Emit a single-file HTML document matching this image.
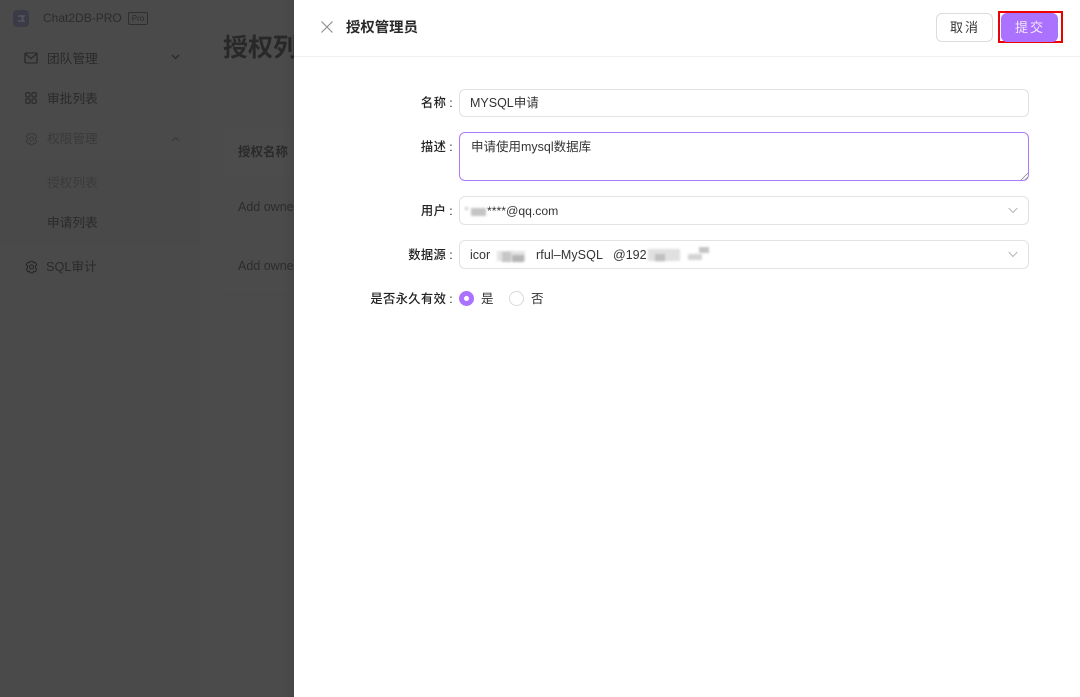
<!DOCTYPE html>
<html><head><meta charset="utf-8">
<style>
html,body{margin:0;padding:0;width:1080px;height:697px;overflow:hidden;background:#fff;font-family:"Liberation Sans","Noto Sans CJK SC",sans-serif}
.a{position:absolute;white-space:nowrap}
#left{position:absolute;left:0;top:0;width:294px;height:697px;background:#4b4b4b;overflow:hidden}
#side{position:absolute;left:0;top:0;width:200px;height:697px;background:#4a4a4a}
.m{font-size:12.7px;line-height:18px;color:#2a2a2a}
.f{position:absolute;left:459px;width:568px;border:1px solid #e2e2e2;border-radius:6px;background:#fff;box-sizing:content-box}
.l{position:absolute;font-size:12.3px;line-height:18px;color:#222;font-weight:500;text-align:right;right:627px;white-space:nowrap;letter-spacing:.35px}
.l i{font-style:normal;margin-left:3px}
.t{position:absolute;font-size:12.5px;line-height:18px;color:#333;white-space:nowrap}
.b{position:absolute;background:#cfcfcf;filter:blur(1px)}
</style></head>
<body>
<div id="left">
 <div id="side"></div>
 <div class="a" style="left:0;top:36px;width:200px;height:1px;background:#484848"></div>
 <div class="a" style="left:0;top:160px;width:200px;height:85px;background:#494949"></div>
 <svg class="a" style="left:12px;top:9px" width="18" height="19" viewBox="0 0 18 19"><rect x="1" y="1" width="16" height="17" rx="4" fill="#3b3b47"/><path d="M6 7h6l-2 2 2 3H6" fill="none" stroke="#55555f" stroke-width="1.5"/></svg>
 <div class="a" style="left:43px;top:9px;font-size:12px;line-height:18px;color:#2c2c2c">Chat2DB-PRO</div>
 <div class="a" style="left:128px;top:12px;width:18px;height:11px;border:1px solid #2f2f2f;border-radius:2px;font-size:8px;line-height:11px;text-align:center;color:#2c2c2c">Pro</div>
 <svg class="a" style="left:24px;top:52px" width="14" height="12" viewBox="0 0 14 12" fill="none" stroke="#252525" stroke-width="1.1"><rect x="1" y="1" width="12" height="10" rx="1"/><path d="M1.5 2 7 6.5 12.5 2"/></svg>
 <div class="a m" style="left:47px;top:50px">团队管理</div>
 <svg class="a" style="left:171px;top:54px" width="9" height="6" viewBox="0 0 9 6" fill="none" stroke="#252525" stroke-width="1.2"><path d="M1 1 4.5 4.5 8 1"/></svg>
 <svg class="a" style="left:25px;top:92px" width="12" height="12" viewBox="0 0 12 12" fill="none" stroke="#252525" stroke-width="1"><rect x=".8" y=".8" width="4.2" height="4.2" rx=".7"/><rect x="7" y=".8" width="4.2" height="4.2" rx=".7"/><rect x=".8" y="7" width="4.2" height="4.2" rx=".7"/><rect x="7" y="7" width="4.2" height="4.2" rx=".7"/></svg>
 <div class="a m" style="left:47px;top:90px">审批列表</div>
 <svg class="a" style="left:25px;top:132px" width="13" height="14" viewBox="0 0 13 14" fill="none" stroke="#3a3a3a" stroke-width="1" stroke-linejoin="round"><path d="M5 1.2H8L8.5 2.8 10.2 2.2 11.8 4.8 10.5 6 10.5 8 11.8 9.2 10.2 11.8 8.5 11.2 8 12.8H5L4.5 11.2 2.8 11.8 1.2 9.2 2.5 8V6L1.2 4.8 2.8 2.2 4.5 2.8Z"/><circle cx="6.5" cy="7" r="2"/></svg>
 <div class="a m" style="left:47px;top:130px;color:#3a3a3a">权限管理</div>
 <svg class="a" style="left:171px;top:136px" width="9" height="6" viewBox="0 0 9 6" fill="none" stroke="#3a3a3a" stroke-width="1.2"><path d="M1 5 4.5 1.5 8 5"/></svg>
 <div class="a m" style="left:47px;top:174px;color:#3b3b3b">授权列表</div>
 <div class="a m" style="left:47px;top:214px">申请列表</div>
 <svg class="a" style="left:25px;top:260px" width="13" height="14" viewBox="0 0 13 14" fill="none" stroke="#252525" stroke-width="1" stroke-linejoin="round"><path d="M5 1.2H8L8.5 2.8 10.2 2.2 11.8 4.8 10.5 6 10.5 8 11.8 9.2 10.2 11.8 8.5 11.2 8 12.8H5L4.5 11.2 2.8 11.8 1.2 9.2 2.5 8V6L1.2 4.8 2.8 2.2 4.5 2.8Z"/><circle cx="6.5" cy="7" r="2"/></svg>
 <div class="a m" style="left:46px;top:258px">SQL审计</div>
 <div class="a" style="left:223px;top:31px;font-size:25px;line-height:34px;font-weight:700;color:#282828">授权列表</div>
 <div class="a" style="left:223px;top:127px;width:71px;height:50px;background:#4c4c4c"></div>
 <div class="a" style="left:238px;top:143px;font-size:12.5px;line-height:18px;font-weight:700;color:#2a2a2a">授权名称</div>
 <div class="a" style="left:238px;top:198px;font-size:12.5px;line-height:18px;color:#2c2c2c">Add owner</div>
 <div class="a" style="left:238px;top:257px;font-size:12.5px;line-height:18px;color:#2c2c2c">Add owner</div>
 <div class="a" style="left:223px;top:236px;width:71px;height:1px;background:#494949"></div>
 <div class="a" style="left:223px;top:295px;width:71px;height:1px;background:#494949"></div>
 <div class="a" style="left:280px;top:0;width:14px;height:697px;background:linear-gradient(to right,rgba(0,0,0,0),rgba(0,0,0,.06))"></div>
</div>

<div class="a" style="left:294px;top:56px;width:786px;height:1px;background:#f1f1f1"></div>
<svg class="a" style="left:320px;top:20px" width="14" height="14" viewBox="0 0 14 14" fill="none" stroke="#8c8c8c" stroke-width="1.1"><path d="M1.5 1.5 12.5 12.5M12.5 1.5 1.5 12.5"/></svg>
<div class="a" style="left:346px;top:18px;font-size:14.4px;line-height:20px;font-weight:700;color:#2a2a2a">授权管理员</div>

<div class="a" style="left:936px;top:13px;width:55px;height:27px;border:1px solid #dcdcdc;border-radius:6px;background:#fff;font-size:13px;line-height:27px;text-align:center;color:#333;letter-spacing:2px;text-indent:1px">取消</div>
<div class="a" style="left:998px;top:11px;width:61px;height:28px;border:2px solid #ee0000;background:#fff"></div>
<div class="a" style="left:1001px;top:13px;width:57px;height:29px;border-radius:6px;background:#ab71ff;font-size:13px;line-height:29px;text-align:center;color:#f3e9ff;letter-spacing:2px;text-indent:1px">提交</div>

<div class="l" style="top:94px">名称<i>:</i></div>
<div class="f" style="top:89px;height:26px"></div>
<div class="t" style="left:470px;top:94px">MYSQL申请</div>

<div class="l" style="top:138px">描述<i>:</i></div>
<div class="f" style="top:132px;height:47px;border-color:#ab7cf5"></div>
<div class="t" style="left:471px;top:138px">申请使用mysql数据库</div>
<svg class="a" style="left:1020px;top:172px" width="9" height="9" viewBox="0 0 9 9" stroke="#888" stroke-width=".8"><path d="M1 8 8 1M5 8 8 5"/></svg>

<div class="l" style="top:202px">用户<i>:</i></div>
<div class="f" style="top:196px;height:27px"></div>
<div class="b" style="left:465px;top:207px;width:3px;height:3px"></div>
<div class="b" style="left:471px;top:208px;width:15px;height:8px;background:#c4c4c4"></div>
<div class="t" style="left:487px;top:202px;font-size:12.2px">****@qq.com</div>
<svg class="a" style="left:1008px;top:207px" width="10" height="7" viewBox="0 0 10 7" fill="none" stroke="#b5b5b5" stroke-width="1"><path d="M.7 1 5 5.5 9.3 1"/></svg>

<div class="l" style="top:246px">数据源<i>:</i></div>
<div class="f" style="top:240px;height:27px"></div>
<div class="t" style="left:470px;top:246px">icor</div>
<div class="b" style="left:497px;top:251px;width:28px;height:10px;background:#e4e4e4"></div>
<div class="b" style="left:502px;top:252px;width:9px;height:10px;background:#c6c6c6"></div>
<div class="b" style="left:512px;top:255px;width:12px;height:7px;background:#b5b5b5"></div>
<div class="t" style="left:536px;top:246px;letter-spacing:.1px">rful–MySQL</div>
<div class="t" style="left:613px;top:246px">@192</div>
<div class="b" style="left:648px;top:249px;width:32px;height:12px;background:#e0e0e0"></div>
<div class="b" style="left:655px;top:254px;width:10px;height:7px;background:#c0c0c0"></div>
<div class="b" style="left:688px;top:254px;width:14px;height:6px;background:#d4d4d4"></div>
<div class="b" style="left:699px;top:247px;width:10px;height:6px;background:#c4c4c4"></div>
<svg class="a" style="left:1008px;top:251px" width="10" height="7" viewBox="0 0 10 7" fill="none" stroke="#b5b5b5" stroke-width="1"><path d="M.7 1 5 5.5 9.3 1"/></svg>

<div class="l" style="top:290px">是否永久有效<i>:</i></div>
<div class="a" style="left:459px;top:291px;width:15px;height:15px;border-radius:50%;background:#ab71ff"></div>
<div class="a" style="left:464px;top:296px;width:5px;height:5px;border-radius:50%;background:#fff"></div>
<div class="t" style="left:481px;top:290px">是</div>
<div class="a" style="left:509px;top:291px;width:13px;height:13px;border:1px solid #d9d9d9;border-radius:50%;background:#fff"></div>
<div class="t" style="left:531px;top:290px">否</div>
</body></html>
